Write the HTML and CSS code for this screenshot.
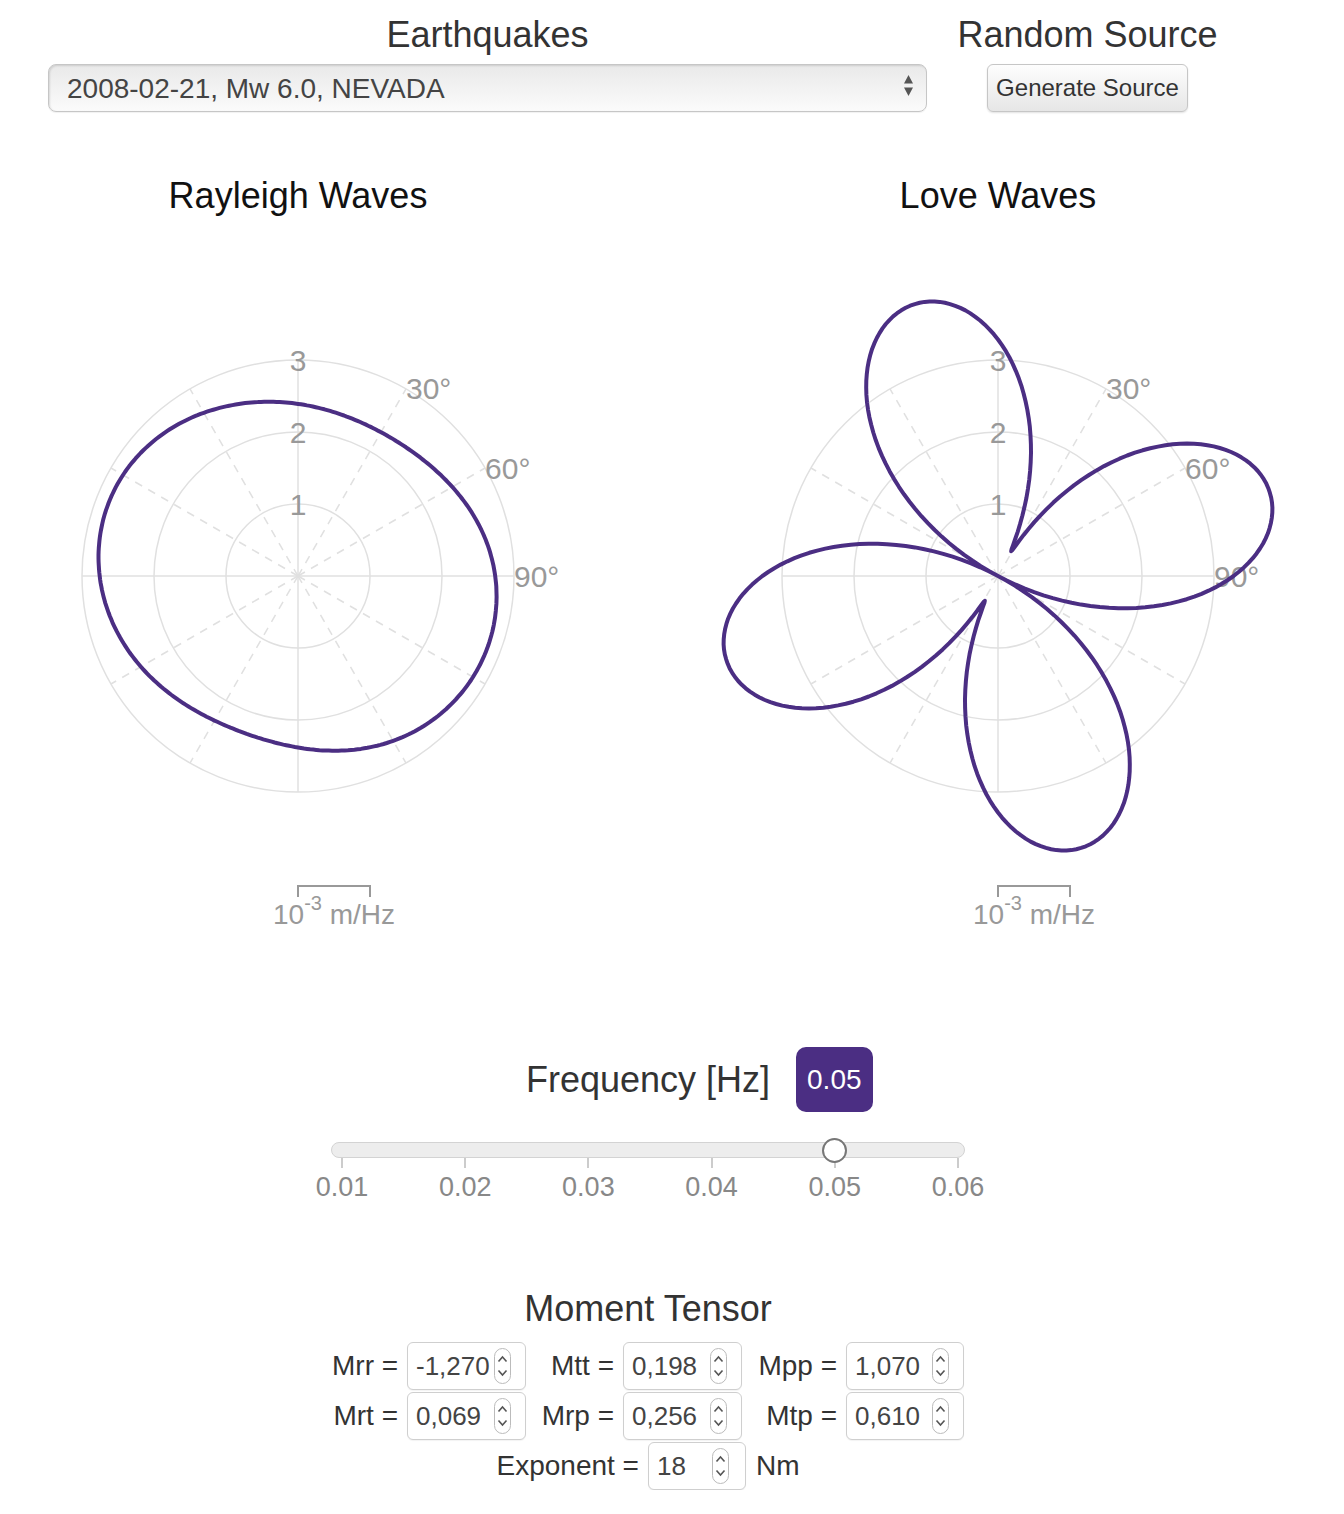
FILE: index.html
```html
<!DOCTYPE html>
<html lang="en">
<head>
  <meta charset="UTF-8" />
  <meta name="viewport" content="width=device-width, initial-scale=1.0"/>
  <title>Surface Wave Radiation Patterns</title>
  <link rel="stylesheet" href="styles.css">
</head>
<body>
  <div class="page">
    <header class="top">
      <div class="quake-col">
        <h2 class="col-title">Earthquakes</h2>
        <div class="select-wrap">
          <select class="quake-select">
            <option>2008-02-21, Mw 6.0, NEVADA</option>
          </select>
          <svg class="select-arrows" width="9" height="21" viewBox="0 0 9 21">
            <polygon points="0,8.5 4.5,0 9,8.5" fill="#555"/>
            <polygon points="0,12.5 9,12.5 4.5,21" fill="#555"/>
          </svg>
        </div>
      </div>
      <div class="source-col">
        <h2 class="col-title">Random Source</h2>
        <button class="gen-btn">Generate Source</button>
      </div>
    </header>

    <section class="charts">
      <div class="chart">
        <h3 class="chart-title">Rayleigh Waves</h3>
        <svg id="rayleigh" class="polar" width="560" height="720"></svg>
      </div>
      <div class="chart">
        <h3 class="chart-title">Love Waves</h3>
        <svg id="love" class="polar" width="560" height="720"></svg>
      </div>
    </section>

    <section class="frequency">
      <div class="freq-head">
        <h3 class="freq-title">Frequency [Hz]</h3>
        <span class="badge">0.05</span>
      </div>
      <div class="slider">
        <div class="track">
          <div class="rail"><span class="handle" style="left: 80%"></span></div>
        </div>
        <div class="ticks">
          <div class="tick"><span class="tick-mark"></span><span class="tick-label">0.01</span></div>
          <div class="tick"><span class="tick-mark"></span><span class="tick-label">0.02</span></div>
          <div class="tick"><span class="tick-mark"></span><span class="tick-label">0.03</span></div>
          <div class="tick"><span class="tick-mark"></span><span class="tick-label">0.04</span></div>
          <div class="tick"><span class="tick-mark"></span><span class="tick-label">0.05</span></div>
          <div class="tick"><span class="tick-mark"></span><span class="tick-label">0.06</span></div>
        </div>
      </div>
    </section>

    <section class="moment">
      <h3 class="moment-title">Moment Tensor</h3>
      <div class="tensor">
        <label class="lbl">Mrr =</label>
        <div class="field"><input type="text" value="-1,270"><svg class="spin" viewBox="0 0 17 36"><rect x="0.5" y="0.5" width="16" height="35" rx="8"/><polyline points="4.5,13.5 8.5,9 12.5,13.5"/><polyline points="4.5,22.5 8.5,27 12.5,22.5"/></svg></div>
        <label class="lbl">Mtt =</label>
        <div class="field"><input type="text" value="0,198"><svg class="spin" viewBox="0 0 17 36"><rect x="0.5" y="0.5" width="16" height="35" rx="8"/><polyline points="4.5,13.5 8.5,9 12.5,13.5"/><polyline points="4.5,22.5 8.5,27 12.5,22.5"/></svg></div>
        <label class="lbl">Mpp =</label>
        <div class="field"><input type="text" value="1,070"><svg class="spin" viewBox="0 0 17 36"><rect x="0.5" y="0.5" width="16" height="35" rx="8"/><polyline points="4.5,13.5 8.5,9 12.5,13.5"/><polyline points="4.5,22.5 8.5,27 12.5,22.5"/></svg></div>

        <label class="lbl">Mrt =</label>
        <div class="field"><input type="text" value="0,069"><svg class="spin" viewBox="0 0 17 36"><rect x="0.5" y="0.5" width="16" height="35" rx="8"/><polyline points="4.5,13.5 8.5,9 12.5,13.5"/><polyline points="4.5,22.5 8.5,27 12.5,22.5"/></svg></div>
        <label class="lbl">Mrp =</label>
        <div class="field"><input type="text" value="0,256"><svg class="spin" viewBox="0 0 17 36"><rect x="0.5" y="0.5" width="16" height="35" rx="8"/><polyline points="4.5,13.5 8.5,9 12.5,13.5"/><polyline points="4.5,22.5 8.5,27 12.5,22.5"/></svg></div>
        <label class="lbl">Mtp =</label>
        <div class="field"><input type="text" value="0,610"><svg class="spin" viewBox="0 0 17 36"><rect x="0.5" y="0.5" width="16" height="35" rx="8"/><polyline points="4.5,13.5 8.5,9 12.5,13.5"/><polyline points="4.5,22.5 8.5,27 12.5,22.5"/></svg></div>
      </div>
      <div class="exp-row">
        <label class="lbl">Exponent =</label>
        <div class="field exp-field"><input type="text" value="18"><svg class="spin" viewBox="0 0 17 36"><rect x="0.5" y="0.5" width="16" height="35" rx="8"/><polyline points="4.5,13.5 8.5,9 12.5,13.5"/><polyline points="4.5,22.5 8.5,27 12.5,22.5"/></svg></div>
        <span class="unit">Nm</span>
      </div>
    </section>
  </div>
  <script src="script.js"></script>
</body>
</html>
```

FILE: styles.css
```css
* {
  box-sizing: border-box;
}
body {
  font-family: "Liberation Sans", Arial, Helvetica, sans-serif;
  background: #fff;
  color: #333;
  margin: 0;
  padding: 0;
}
.page {
  width: 1296px;
}

/* top controls */
.top {
  display: flex;
  padding-left: 48px;
}
.quake-col {
  width: 879px;
  text-align: center;
}
.source-col {
  width: 321px;
  text-align: center;
}
.col-title {
  font-size: 36px;
  line-height: 40px;
  font-weight: normal;
  margin: 15px 0 9px;
}
.select-wrap {
  position: relative;
}
.quake-select {
  display: block;
  width: 100%;
  height: 48px;
  -webkit-appearance: none;
  appearance: none;
  font-family: inherit;
  font-size: 28px;
  color: #444;
  padding: 0 40px 0 18px;
  border: 1px solid #c6c6c6;
  border-radius: 8px;
  background: linear-gradient(#e9e9e9, #fbfbfb);
  box-shadow: inset 1px 1px 2px rgba(0,0,0,0.12), 0 1px 1px rgba(0,0,0,0.06);
}
.select-arrows {
  position: absolute;
  right: 14px;
  top: 11px;
}
.gen-btn {
  width: 201px;
  height: 48px;
  padding: 0;
  font-family: inherit;
  font-size: 24px;
  color: #333;
  background: linear-gradient(#fdfdfd, #e6e6e6);
  border: 1px solid #c6c6c6;
  border-radius: 6px;
  box-shadow: 0 1px 2px rgba(0,0,0,0.12);
}

/* polar charts */
.charts {
  display: flex;
  gap: 140px;
  padding-left: 18px;
  margin-top: 64px;
}
.chart {
  width: 560px;
  text-align: center;
}
.chart-title {
  font-size: 36px;
  line-height: 40px;
  font-weight: normal;
  color: #111;
  margin: 0 0 20px;
}
.polar {
  display: block;
}
.polar .ring {
  fill: none;
  stroke: #e0e0e0;
  stroke-width: 1.5;
}
.polar .axis {
  stroke: #e0e0e0;
  stroke-width: 1.5;
}
.polar .spoke {
  stroke: #e0e0e0;
  stroke-width: 1.5;
  stroke-dasharray: 8 7;
}
.polar .label {
  fill: #999;
  font-size: 30px;
}
.polar .curve {
  fill: none;
  stroke: #4b2e83;
  stroke-width: 4;
  stroke-linejoin: round;
}
.polar .scale {
  fill: none;
  stroke: #999;
  stroke-width: 2;
}
.polar .scale-text {
  fill: #999;
  font-size: 28px;
}

/* frequency slider */
.frequency {
  margin-top: 91px;
}
.freq-head {
  display: grid;
  grid-template-columns: 1fr auto 1fr;
  column-gap: 26px;
  align-items: center;
}
.freq-title {
  grid-column: 2;
  font-size: 36px;
  line-height: 40px;
  font-weight: normal;
  margin: 0;
}
.badge {
  grid-column: 3;
  justify-self: start;
  height: 65px;
  line-height: 65px;
  padding: 0 11px;
  border-radius: 10px;
  background: #4b2e83;
  color: #fff;
  font-size: 28px;
}
.slider {
  width: 634px;
  margin: 30px auto 0;
}
.track {
  position: relative;
  height: 16px;
  border: 1px solid #d3d3d3;
  border-radius: 8px;
  background: #ededed;
}
.rail {
  position: absolute;
  left: 10px;
  right: 6px;
  top: 0;
  bottom: 0;
}
.handle {
  position: absolute;
  top: 50%;
  width: 25px;
  height: 25px;
  margin: -12.5px 0 0 -12.5px;
  border: 2px solid #777;
  border-radius: 50%;
  background: #fff;
}
.ticks {
  display: flex;
  justify-content: space-between;
  width: 618px;
  margin-left: 10px;
}
.tick {
  width: 2px;
  display: flex;
  flex-direction: column;
  align-items: center;
}
.tick-mark {
  width: 2px;
  height: 10px;
  background: #ccc;
}
.tick-label {
  margin-top: 4px;
  font-size: 27px;
  line-height: 30px;
  color: #888;
  white-space: nowrap;
}

/* moment tensor */
.moment {
  margin-top: 87px;
  text-align: center;
}
.moment-title {
  font-size: 36px;
  line-height: 40px;
  font-weight: normal;
  margin: 0 0 13px;
}
.tensor {
  display: grid;
  grid-template-columns: 75px 119px 97px 119px 104px 118px;
  row-gap: 2px;
  width: 632px;
  margin: 0 auto;
}
.lbl {
  font-size: 28px;
  line-height: 48px;
  text-align: right;
  padding-right: 9px;
  white-space: nowrap;
}
.field {
  display: flex;
  align-items: center;
  height: 48px;
  border: 1px solid #cfcfcf;
  border-radius: 6px;
  background: #fff;
  box-shadow: 0 1px 1px rgba(0,0,0,0.05);
}
.field input {
  flex: 1;
  min-width: 0;
  height: 100%;
  border: 0;
  outline: 0;
  background: transparent;
  padding: 0 0 0 8px;
  font-family: inherit;
  font-size: 26px;
  color: #444;
}
.spin {
  flex: none;
  width: 17px;
  height: 36px;
  margin-right: 14px;
}
.spin rect {
  fill: #fff;
  stroke: #bbb;
}
.spin polyline {
  fill: none;
  stroke: #555;
  stroke-width: 1.6;
}
.exp-row {
  display: flex;
  justify-content: center;
  align-items: center;
  margin-top: 2px;
}
.exp-row .lbl {
  padding-right: 9px;
}
.exp-field {
  width: 98px;
}
.exp-field .spin {
  margin-right: 16px;
}
.unit {
  font-size: 28px;
  margin-left: 10px;
}
```

FILE: script.js
```js
// polar radiation plots, radius in units of 10^-3 m/Hz, angle clockwise from north
const SVG_NS = "http://www.w3.org/2000/svg";
const UNIT = 72;
const RINGS = 3;
const CX = 280, CY = 340;
const TWO_PI = 2 * Math.PI;
const rad = d => d * Math.PI / 180;

// rayleigh amplitude, sampled as x/y offsets (px) from the centre
const rayleighSamples = [
  [-36.7, -173], [0, -172], [33.3, -165], [66.7, -151.7], [100, -133.3],
  [126.7, -115], [150, -93.3], [167.2, -72], [183.3, -46.7], [193.3, -20],
  [198.5, 0], [199.5, 25], [191.7, 61], [180, 91], [163.3, 117.7],
  [140, 141], [109, 159.5], [73.3, 171.7], [33.3, 173.3], [0, 171],
  [-43.3, 161], [-76.7, 147.7], [-110, 129.3], [-143.3, 104.3], [-170, 74.3],
  [-190, 37.7], [-198.3, 1], [-198.3, -35.7], [-188.3, -75.7], [-170, -109],
  [-143.3, -135.7], [-110, -157.3], [-76.7, -169]
];

// love amplitude: four lobed 2-phi term plus a small 1-phi term in quadrature
const love = t => Math.hypot(3.94 * Math.cos(2 * (t - rad(343))), 0.39 * Math.cos(t - rad(28)));

// low-pass fourier fit of the sampled radius, returns r(theta) in units
function fitPattern(samples, harmonics) {
  const polar = samples
    .map(([x, y]) => [(Math.atan2(x, -y) + TWO_PI) % TWO_PI, Math.hypot(x, y)])
    .sort((a, b) => a[0] - b[0]);
  const n = polar.length;
  const grid = [];
  for (let i = 0; i < 360; i++) {
    const t = rad(i);
    let j = polar.findIndex(p => p[0] > t);
    if (j === -1) j = 0;
    const a = polar[(j - 1 + n) % n], b = polar[j];
    let tb = b[0], tt = t;
    if (tb <= a[0]) tb += TWO_PI;
    if (tt < a[0]) tt += TWO_PI;
    grid.push(a[1] + (b[1] - a[1]) * (tt - a[0]) / (tb - a[0]));
  }
  const coef = [];
  for (let k = 0; k <= harmonics; k++) {
    let c = 0, s = 0;
    grid.forEach((r, i) => {
      c += r * Math.cos(k * rad(i));
      s += r * Math.sin(k * rad(i));
    });
    coef.push([c / 180, s / 180]);
  }
  coef[0][0] /= 2;
  return t => coef.reduce((r, [c, s], k) => r + c * Math.cos(k * t) + s * Math.sin(k * t), 0) / UNIT;
}

function make(tag, attrs, text) {
  const node = document.createElementNS(SVG_NS, tag);
  for (const k in attrs) node.setAttribute(k, attrs[k]);
  if (text) node.textContent = text;
  return node;
}

function point(r, deg) {
  return [CX + r * Math.sin(rad(deg)), CY - r * Math.cos(rad(deg))];
}

function patternPath(pattern) {
  let d = "";
  for (let deg = 0; deg <= 360; deg += 1) {
    const [x, y] = point(pattern(rad(deg)) * UNIT, deg);
    d += (deg === 0 ? "M" : "L") + x.toFixed(1) + " " + y.toFixed(1);
  }
  return d + "Z";
}

function drawPolar(svg, pattern) {
  const outer = RINGS * UNIT;

  for (let k = 1; k <= RINGS; k++) {
    svg.appendChild(make("circle", { class: "ring", cx: CX, cy: CY, r: k * UNIT }));
  }
  svg.appendChild(make("line", { class: "axis", x1: CX, y1: CY - outer, x2: CX, y2: CY + outer }));
  svg.appendChild(make("line", { class: "axis", x1: CX - outer, y1: CY, x2: CX + outer, y2: CY }));

  for (let deg = 30; deg < 360; deg += 30) {
    if (deg % 90 === 0) continue;
    const [x, y] = point(outer, deg);
    svg.appendChild(make("line", { class: "spoke", x1: CX, y1: CY, x2: x, y2: y }));
  }

  for (let k = 1; k <= RINGS; k++) {
    svg.appendChild(make("text", {
      class: "label", x: CX, y: CY - k * UNIT,
      "text-anchor": "middle", "dominant-baseline": "central"
    }, String(k)));
  }
  [30, 60, 90].forEach(deg => {
    const [x, y] = point(outer, deg);
    svg.appendChild(make("text", {
      class: "label", x: x, y: y, "dominant-baseline": "central"
    }, deg + "\u00b0"));
  });

  svg.appendChild(make("path", { class: "curve", d: patternPath(pattern) }));

  // scale bar, one unit long
  const sy = CY + 310;
  svg.appendChild(make("path", {
    class: "scale",
    d: `M${CX} ${sy + 11}V${sy}H${CX + UNIT}V${sy + 11}`
  }));
  const label = make("text", { class: "scale-text", x: CX + UNIT / 2, y: sy + 38, "text-anchor": "middle" }, "10");
  label.appendChild(make("tspan", { dy: -14, "font-size": 20 }, "-3"));
  label.appendChild(make("tspan", { dy: 14 }, " m/Hz"));
  svg.appendChild(label);
}

drawPolar(document.getElementById("rayleigh"), fitPattern(rayleighSamples, 5));
drawPolar(document.getElementById("love"), love);
```
